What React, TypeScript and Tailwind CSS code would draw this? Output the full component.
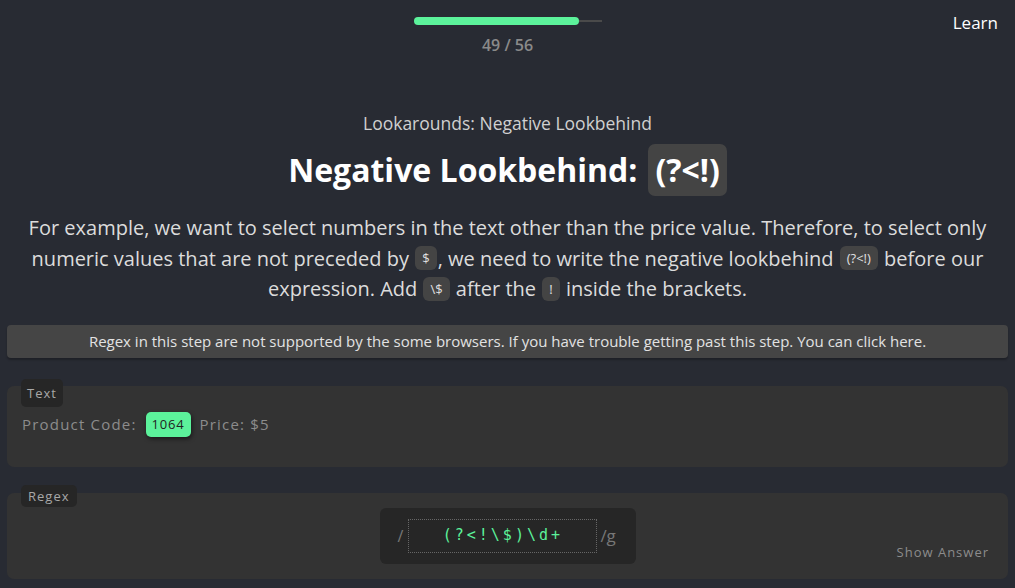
import React from "react";

const Chip = ({ children }: { children: React.ReactNode }) => (
  <code className="inline-block align-middle rounded-[6px] bg-[#444444] px-[7px] py-[3px] text-[13px] leading-[18px] text-[#e0e0e0] font-['Open_Sans',sans-serif] mx-[1px] relative -top-[2px]">
    {children}
  </code>
);

export default function App() {
  return (
    <div className="min-h-screen bg-[#282b33] font-['Open_Sans',sans-serif] text-white relative overflow-hidden">
      <div className="absolute right-[17px] top-[10px] text-[17px] text-white">Learn</div>

      <div className="flex flex-col items-center pt-[17px]">
        <div className="relative w-[188px] h-[8px] flex items-center">
          <div className="w-full h-[2px] bg-[#4a4a4a]" />
          <div className="absolute left-0 top-0 h-[8px] w-[165px] rounded-full bg-[#5cf29b]" />
        </div>
        <div className="mt-[9px] text-[16px] font-semibold text-[#8a8a8a] leading-[22px]">49 / 56</div>
      </div>

      <div className="mt-[56px] text-center text-[17.5px] leading-[22px] text-[#d0d0d0]">
        Lookarounds: Negative Lookbehind
      </div>
      <div className="mt-[10px] flex justify-center items-center gap-[11px]">
        <span className="text-[32px] font-bold leading-[52px]">Negative Lookbehind:</span>
        <span className="rounded-[7px] bg-[#444444] px-[7px] text-[32px] font-bold leading-[52px]">(?&lt;!)</span>
      </div>
      <p className="mt-[17px] px-[20px] text-center text-[20px] leading-[30.5px] text-[#dcdcdc]">
        For example, we want to select numbers in the text other than the price value. Therefore, to select only
        numeric values that are not preceded by <Chip>$</Chip>, we need to write the negative lookbehind{" "}
        <Chip>(?&lt;!)</Chip> before our expression. Add <Chip>\$</Chip> after the <Chip>!</Chip> inside the brackets.
      </p>

      <div className="mx-[7px] mt-[20px] h-[33px] rounded-[4px] bg-[#454545] shadow-[0_2px_2px_rgba(0,0,0,0.25)] flex items-center justify-center text-[15px] text-[#e2e2e2]">
        Regex in this step are not supported by the some browsers. If you have trouble getting past this step. You can click here.
      </div>

      <div className="relative mx-[7px] mt-[28px] h-[81px] rounded-[7px] bg-[#333333] pl-[15px] pt-[26px]">
        <div className="absolute left-[14px] -top-[7px] rounded-[5px] bg-[#262626] px-[6px] py-[3px] text-[13px] leading-[22px] tracking-[1px] text-[#a8a8a8]">
          Text
        </div>
        <div className="flex items-center text-[15px] tracking-[1.2px] text-[#8c8c8c]">
          <span>Product Code:</span>
          <span className="ml-[9px] rounded-[5px] bg-[#5cf29b] px-[6px] text-[13px] leading-[25px] tracking-[0.8px] text-[#222] shadow-[1px_2px_4px_rgba(0,0,0,0.5)]">
            1064
          </span>
          <span className="ml-[9px]">Price: $5</span>
        </div>
      </div>

      <div className="relative mx-[7px] mt-[26px] h-[86px] rounded-[7px] bg-[#333333] flex justify-center pt-[15px]">
        <div className="absolute left-[14px] -top-[8px] rounded-[5px] bg-[#262626] px-[7px] text-[13px] leading-[22px] tracking-[1px] text-[#a8a8a8]">
          Regex
        </div>
        <div className="h-[56px] w-[256px] rounded-[6px] bg-[#262626] flex items-center pl-[18px]">
          <span className="text-[16px] text-[#777]">/</span>
          <div className="ml-[5px] h-[34px] w-[189px] border border-dotted border-[#666] flex items-center justify-center font-['DejaVu_Sans_Mono',monospace] text-[15px] tracking-[3px] text-[#5cf29b]">
            (?&lt;!\$)\d+
          </div>
          <span className="ml-[3px] text-[17px] text-[#777]">/g</span>
        </div>
        <div className="absolute right-[19px] bottom-[16px] text-[13px] tracking-[1px] text-[#8c8c8c]">Show Answer</div>
      </div>
    </div>
  );
}
